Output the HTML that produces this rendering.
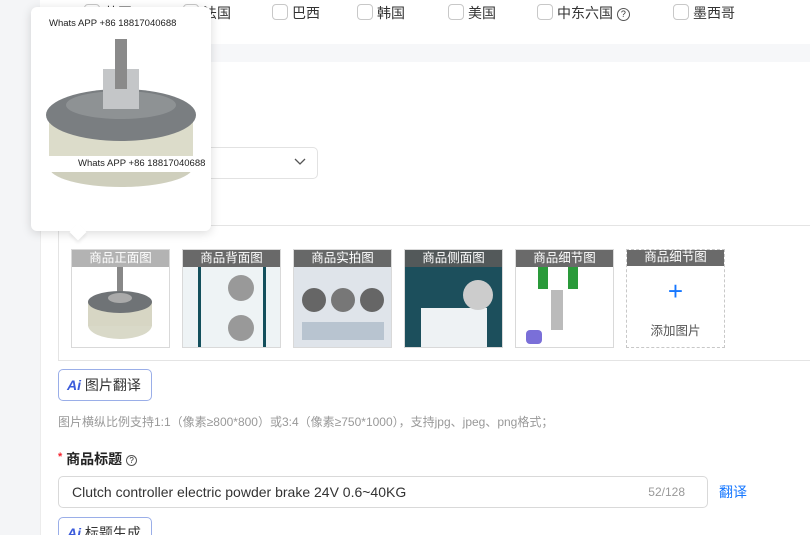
<!DOCTYPE html>
<html><head><meta charset="utf-8"><style>
*{margin:0;padding:0;box-sizing:border-box}
html,body{width:810px;height:535px;overflow:hidden}
body{background:#fff;font-family:"Liberation Sans","Noto Sans CJK SC",sans-serif;position:relative;color:#333}
.abs{position:absolute}
.cb{position:absolute;top:4px;width:16px;height:16px;border:1px solid #c8c8c8;border-radius:4px;background:#fff}
.cl{position:absolute;top:3px;font-size:14px;color:#333}
.th{position:absolute;top:249px;width:99px;height:99px;border:1px solid #d9d9d9;background:#f4f4f4;overflow:hidden}
.th .lb{position:absolute;left:0;top:0;right:0;height:17px;background:rgba(90,90,90,.9);color:#fff;font-size:12.5px;text-align:center;line-height:17px}
</style></head><body>
<div class="abs" style="left:0;top:0;width:40px;height:535px;background:#f4f5f7"></div>
<div class="abs" style="left:42px;top:44px;width:768px;height:18px;background:#f6f7f9"></div>
<div class="abs" style="left:40px;top:62px;width:1px;height:473px;background:#ececec"></div>

<div class="cb" style="left:84px"></div><span class="cl" style="left:104px">英国</span>
<div class="cb" style="left:183px"></div><span class="cl" style="left:203px">法国</span>
<div class="cb" style="left:272px"></div><span class="cl" style="left:292px">巴西</span>
<div class="cb" style="left:357px"></div><span class="cl" style="left:377px">韩国</span>
<div class="cb" style="left:448px"></div><span class="cl" style="left:468px">美国</span>
<div class="cb" style="left:537px"></div><span class="cl" style="left:557px">中东六国 <span style="display:inline-block;width:13px;height:13px;border:1px solid #555;border-radius:50%;font-size:9px;line-height:11px;text-align:center;vertical-align:1px">?</span></span>
<div class="cb" style="left:673px"></div><span class="cl" style="left:693px">墨西哥</span>

<div class="abs" style="left:150px;top:147px;width:168px;height:32px;border:1px solid #e2e2e2;border-radius:5px;background:#fff"></div>
<svg class="abs" style="left:294px;top:158px" width="12" height="8"><path d="M1 1l5 5 5-5" stroke="#555" fill="none" stroke-width="1.3"/></svg>

<div class="abs" style="left:58px;top:225px;width:760px;height:136px;border:1px solid #e4e4e4;border-right:none"></div>

<div class="th" style="left:71px;background:#fff"><div class="lb" style="background:rgba(160,160,160,.8)">商品正面图</div>
<svg width="99" height="99" style="position:absolute;top:0;left:0"><rect x="45" y="17" width="6" height="25" fill="#888"/><ellipse cx="48" cy="75" rx="32" ry="14" fill="#d9d9c8"/><rect x="16" y="52" width="64" height="24" fill="#d7d6c4"/><ellipse cx="48" cy="52" rx="32" ry="11" fill="#6f7376"/><ellipse cx="48" cy="48" rx="12" ry="5" fill="#aaa"/></svg></div>
<div class="th" style="left:182px;background:#eef3f5"><div class="lb">商品背面图</div><div style="position:absolute;left:15px;top:17px;width:3px;height:82px;background:#134f5c"></div><div style="position:absolute;left:80px;top:17px;width:3px;height:82px;background:#134f5c"></div><div style="position:absolute;left:45px;top:25px;width:26px;height:26px;border-radius:50%;background:#999"></div><div style="position:absolute;left:45px;top:65px;width:26px;height:26px;border-radius:50%;background:#999"></div></div>
<div class="th" style="left:293px;background:#dfe4ea"><div class="lb">商品实拍图</div><div style="position:absolute;left:8px;top:38px;width:24px;height:24px;border-radius:50%;background:#666"></div><div style="position:absolute;left:37px;top:38px;width:24px;height:24px;border-radius:50%;background:#777"></div><div style="position:absolute;left:66px;top:38px;width:24px;height:24px;border-radius:50%;background:#666"></div><div style="position:absolute;left:8px;top:72px;width:82px;height:18px;background:#b8c4d0"></div></div>
<div class="th" style="left:404px;background:#1c4f5c"><div class="lb">商品侧面图</div><div style="position:absolute;left:16px;top:58px;width:66px;height:41px;background:#eef2f4"></div><div style="position:absolute;left:58px;top:30px;width:30px;height:30px;border-radius:50%;background:#ccc"></div></div>
<div class="th" style="left:515px;background:#fff"><div class="lb">商品细节图</div><div style="position:absolute;left:22px;top:17px;width:10px;height:22px;background:#2a9a3a"></div><div style="position:absolute;left:52px;top:17px;width:10px;height:22px;background:#2a9a3a"></div><div style="position:absolute;left:35px;top:40px;width:12px;height:40px;background:#bbb"></div><div style="position:absolute;left:10px;top:80px;width:16px;height:14px;background:#7a6fd8;border-radius:4px"></div></div>
<div class="th" style="left:626px;background:#fff;border:1px dashed #c8c8c8"><div class="lb" style="left:-1px;right:-1px;top:-1px">商品细节图</div><div style="position:absolute;left:0;right:0;top:28px;text-align:center;color:#1677ff;font-size:26px;line-height:26px">+</div><div style="position:absolute;left:0;right:0;top:70px;text-align:center;font-size:12.5px;color:#555">添加图片</div></div>

<div class="abs" style="left:58px;top:369px;width:94px;height:32px;border:1px solid #9aaee8;border-radius:5px;font-size:14px;line-height:30px;padding-left:8px;color:#333"><b style="color:#3b5bdb;font-style:italic">Ai</b> 图片翻译</div>
<div class="abs" style="left:58px;top:413px;font-size:12px;color:#999">图片横纵比例支持1:1（像素≥800*800）或3:4（像素≥750*1000），支持jpg、jpeg、png格式；</div>
<div class="abs" style="left:58px;top:449px;font-size:14px;font-weight:bold;color:#222"><span style="color:#f5222d;font-size:11px;vertical-align:4px">*</span> 商品标题 <span style="display:inline-block;width:11px;height:11px;border:1px solid #555;border-radius:50%;font-size:8px;line-height:9px;text-align:center;font-weight:normal;vertical-align:1px">?</span></div>
<div class="abs" style="left:58px;top:476px;width:650px;height:32px;border:1px solid #d9d9d9;border-radius:5px;font-size:14px;line-height:30px;padding-left:13px;color:#333">Clutch controller electric powder brake 24V 0.6~40KG<span style="position:absolute;right:22px;font-size:12px;color:#999">52/128</span></div>
<div class="abs" style="left:719px;top:482px;font-size:14px;color:#1677ff">翻译</div>
<div class="abs" style="left:58px;top:517px;width:94px;height:30px;border:1px solid #9aaee8;border-radius:5px;font-size:14px;line-height:30px;padding-left:8px;color:#333"><b style="color:#3b5bdb;font-style:italic">Ai</b> 标题生成</div>

<div class="abs" style="left:31px;top:7px;width:180px;height:224px;background:#fff;border-radius:6px;box-shadow:0 2px 10px rgba(0,0,0,.15)">
<div style="position:absolute;left:18px;top:11px;font-size:9.5px;color:#222;white-space:nowrap">Whats APP +86 18817040688</div>
<svg width="180" height="200" style="position:absolute;left:0;top:0">
<ellipse cx="90" cy="160" rx="72" ry="20" fill="#cfcfbd"/>
<rect x="18" y="110" width="144" height="50" fill="#dcdcca"/>
<ellipse cx="90" cy="108" rx="75" ry="26" fill="#7a7e81"/>
<ellipse cx="90" cy="98" rx="55" ry="14" fill="#8e9294"/>
<rect x="72" y="62" width="36" height="40" fill="#c4c6c8"/>
<rect x="84" y="32" width="12" height="50" fill="#8a8a8a"/>
</svg>
<div style="position:absolute;left:17px;top:149px;width:145px;height:16px;background:#fff;font-size:9.5px;color:#222;line-height:16px;padding-left:30px;white-space:nowrap">Whats APP +86 18817040688</div>
</div>
<div class="abs" style="left:72px;top:226px;width:12px;height:12px;background:#fff;transform:rotate(45deg);box-shadow:2px 2px 3px rgba(0,0,0,.08)"></div>
</body></html>
